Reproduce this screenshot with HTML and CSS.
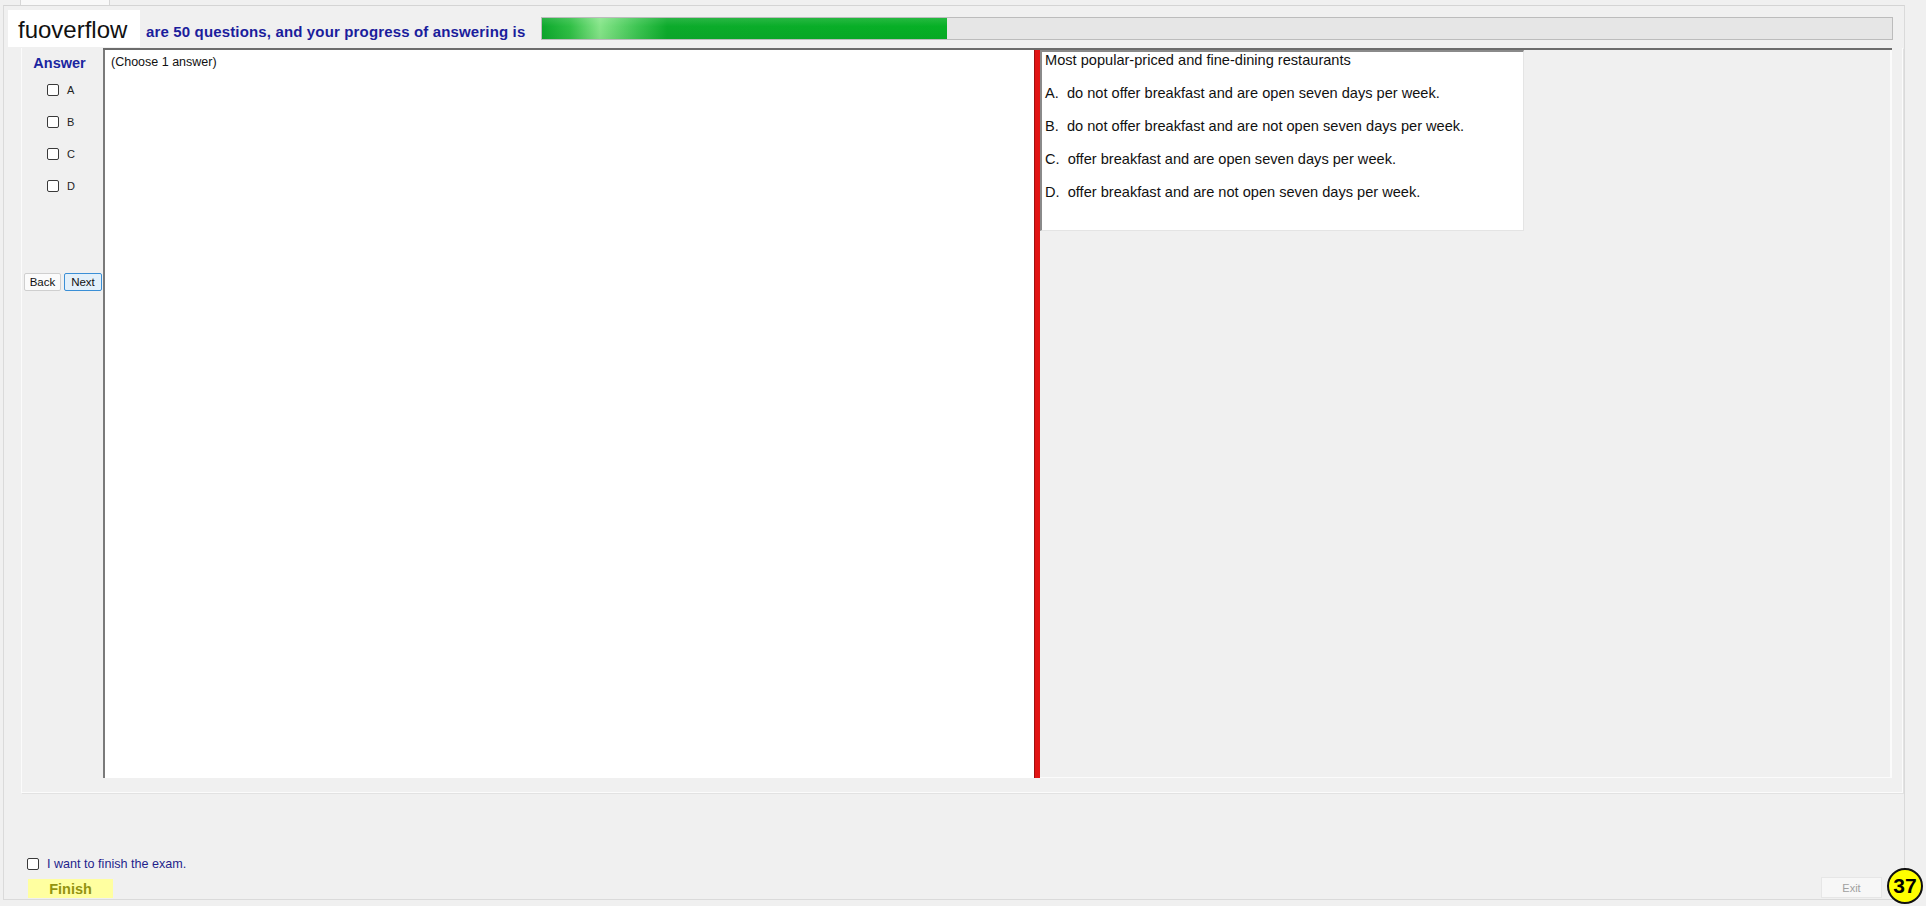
FILE: index.html
```html
<!DOCTYPE html>
<html lang="en">
<head>
    <meta charset="UTF-8">
    <title>Exam</title>
    <link rel="stylesheet" href="styles.css">
</head>
<body>
    <div class="tabs"><span class="tab"></span></div>
    <div class="tabpage">
        <div class="header">
            <div class="brand">fuoverflow</div>
            <div class="progress-label">are 50 questions, and your progress of answering is</div>
            <div class="progress"><div class="progress-fill" style="width: 30%"></div></div>
        </div>

        <div class="panel">
            <div class="answers">
                <div class="answers-title">Answer</div>
                <label class="opt"><span class="box"></span>A</label>
                <label class="opt"><span class="box"></span>B</label>
                <label class="opt"><span class="box"></span>C</label>
                <label class="opt"><span class="box"></span>D</label>
                <div class="nav">
                    <button class="btn">Back</button>
                    <button class="btn next">Next</button>
                </div>
            </div>
            <div class="content">
                <div class="sheet">(Choose 1 answer)</div>
                <div class="divider"></div>
                <div class="question-area">
                    <div class="question">
                        <p>Most popular-priced and fine-dining restaurants</p>
                        <p>A.&nbsp; do not offer breakfast and are open seven days per week.</p>
                        <p>B.&nbsp; do not offer breakfast and are not open seven days per week.</p>
                        <p>C.&nbsp; offer breakfast and are open seven days per week.</p>
                        <p>D.&nbsp; offer breakfast and are not open seven days per week.</p>
                    </div>
                </div>
            </div>
        </div>

        <div class="footer">
            <div class="finish-group">
                <label class="confirm"><span class="box"></span>I want to finish the exam.</label>
                <button class="finish">Finish</button>
            </div>
            <button class="exit">Exit</button>
        </div>
    </div>
    <div class="badge">37</div>
</body>
</html>
```

FILE: styles.css
```css
body {
    margin: 0;
    background: #f0f0f0;
    font-family: "Liberation Sans", Arial, sans-serif;
    width: 1926px;
    height: 906px;
    overflow: hidden;
    position: relative;
}
.tabs {
    height: 5px;
    padding-left: 20px;
}
.tab {
    display: block;
    width: 88px;
    height: 5px;
    background: #f8f8f8;
    border-left: 1px solid #d6d6d6;
    border-right: 1px solid #d6d6d6;
}
.tabpage {
    box-sizing: border-box;
    margin-left: 3px;
    width: 1902px;
    height: 895px;
    border: 1px solid #dadada;
    border-top-color: #d4d4d4;
    display: flex;
    flex-direction: column;
}
.header {
    display: flex;
    align-items: flex-start;
    height: 42px;
    padding-left: 4px;
    padding-right: 11px;
}
.brand {
    margin-top: 4px;
    width: 132px;
    height: 37px;
    box-sizing: border-box;
    padding-left: 10px;
    background: #fff;
    font-size: 24px;
    line-height: 39px;
    color: #111;
    position: relative;
    z-index: 2;
}
.progress-label {
    margin-top: 17px;
    margin-left: 6px;
    font-size: 15px;
    font-weight: bold;
    letter-spacing: 0.15px;
    line-height: 18px;
    color: #1b1d9c;
    white-space: nowrap;
}
.progress {
    margin-left: auto;
    margin-top: 11px;
    width: 1352px;
    height: 23px;
    box-sizing: border-box;
    background: #e6e6e6;
    border: 1px solid #bcbcbc;
}
.progress-fill {
    height: 100%;
    background:
        linear-gradient(to bottom, rgba(255,255,255,0.12), rgba(255,255,255,0) 40%, rgba(0,0,0,0.04)),
        linear-gradient(to right, #0ca82c 0, #2fbf45 28px, #86e589 58px, #3dc552 95px, #0cab2b 125px, #06b025 100%);
}
.panel {
    display: flex;
    align-items: flex-start;
    margin-left: 17px;
    width: 1882px;
    height: 745px;
    box-sizing: border-box;
    border-left: 1px solid #fbfbfb;
    border-right: 1px solid #fbfbfb;
    border-bottom: 1px solid #fbfbfb;
    box-shadow: 1px 1px 0 #e2e2e2;
}
.answers {
    width: 81px;
    flex-shrink: 0;
}
.answers-title {
    margin-top: 6px;
    padding-right: 6px;
    text-align: center;
    font-weight: bold;
    font-size: 14.5px;
    line-height: 18px;
    color: #1b26a0;
}
.opt {
    display: flex;
    align-items: center;
    height: 32px;
    padding-left: 25px;
    font-size: 11px;
    color: #222;
}
.opt:first-of-type {
    margin-top: 2px;
}
.box {
    display: inline-block;
    width: 12px;
    height: 12px;
    box-sizing: border-box;
    border: 1px solid #3a3a3a;
    border-radius: 2px;
    background: #fff;
    margin-right: 8px;
}
.nav {
    display: flex;
    gap: 3px;
    margin-top: 71px;
    padding-left: 2px;
}
.btn {
    width: 37px;
    height: 18px;
    padding: 0;
    font-family: inherit;
    font-size: 11.5px;
    color: #111;
    background: #fbfbfb;
    border: 1px solid #cfcfcf;
    border-radius: 2px;
}
.btn.next {
    width: 38px;
    background: #e3f0fa;
    border-color: #3a8fd6;
}
.content {
    display: flex;
    width: 1789px;
    height: 730px;
    box-sizing: border-box;
    border-top: 2px solid #6c6c6c;
}
.sheet {
    width: 931px;
    box-sizing: border-box;
    border-left: 2px solid #7a7a7a;
    background: #fff;
    padding: 4px 0 0 6px;
    font-size: 12.5px;
    line-height: 16px;
    color: #111;
}
.divider {
    width: 6px;
    background: #e11414;
    border-left: 1px solid #a01010;
    box-sizing: border-box;
}
.question-area {
    flex: 1;
    border-right: 2px solid #fbfbfb;
    border-bottom: 1px solid #fbfbfb;
}
.question {
    width: 484px;
    height: 181px;
    box-sizing: border-box;
    background: #fff;
    border-left: 2px solid #8a8a8a;
    border-top: 2px solid #8a8a8a;
    border-right: 1px solid #e4e4e4;
    border-bottom: 1px solid #e4e4e4;
    padding-left: 3px;
    font-size: 14.6px;
    color: #111;
}
.question p {
    margin: 15px 0 0;
    line-height: 18px;
    white-space: nowrap;
}
.question p:first-child {
    margin-top: -1px;
}
.footer {
    flex: 1;
    display: flex;
    justify-content: space-between;
    align-items: flex-end;
    padding-left: 23px;
    padding-right: 22px;
    padding-bottom: 1px;
}
.finish-group {
    display: flex;
    flex-direction: column;
    align-items: flex-start;
}
.confirm {
    display: flex;
    align-items: center;
    height: 14px;
    font-size: 12.6px;
    color: #1f1f8c;
}
.finish {
    margin-top: 8px;
    margin-left: 1px;
    width: 85px;
    height: 19px;
    padding: 0;
    border: none;
    background: #ffffa0;
    font-family: inherit;
    font-weight: bold;
    font-size: 14.5px;
    color: #93930f;
}
.exit {
    width: 61px;
    height: 21px;
    padding: 0;
    background: #f7f7f7;
    border: 1px solid #e6e6e6;
    font-family: inherit;
    font-size: 11px;
    color: #a0a0a0;
}
.badge {
    position: absolute;
    left: 1887px;
    top: 868px;
    width: 36px;
    height: 36px;
    box-sizing: border-box;
    border: 2px solid #111;
    border-radius: 50%;
    background: #ffff00;
    font-weight: bold;
    font-size: 21px;
    line-height: 32px;
    text-align: center;
    color: #000;
}
```
